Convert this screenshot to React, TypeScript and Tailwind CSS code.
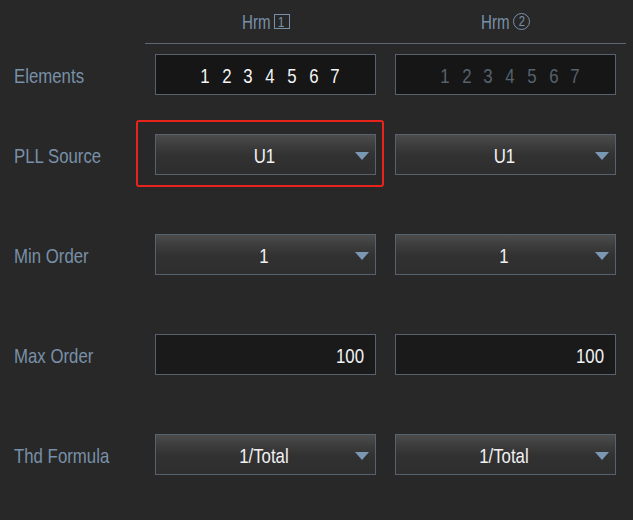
import React from "react";

const FONT = '"Liberation Sans", Arial, sans-serif';

function Sx({ children, o = "center" }: { children: React.ReactNode; o?: "left" | "center" | "right" }) {
  const origin = o === "left" ? "origin-left" : o === "right" ? "origin-right" : "origin-center";
  return <span className={`inline-block whitespace-pre scale-x-[0.8] ${origin}`}>{children}</span>;
}

function Arrow() {
  return (
    <svg width="14" height="8" viewBox="0 0 14 8" className="absolute right-[6px] top-[17px]">
      <polygon points="0,0 14,0 7,8" fill="#7a98b4" />
    </svg>
  );
}

function Dropdown({ value }: { value: string }) {
  return (
    <div className="relative w-[221px] h-[41px] border border-[#56636f] bg-[linear-gradient(to_bottom,#4c4c4c_0%,#3b3b3b_30%,#313131_55%,#2e2e2e_100%)] flex items-center justify-center text-[#f2f2f2] text-[21px] leading-none pt-[1px]">
      <span className="-ml-[3px]"><Sx>{value}</Sx></span>
      <Arrow />
    </div>
  );
}

function NumBox({ value }: { value: string }) {
  return (
    <div className="w-[221px] h-[41px] border border-[#56636f] bg-[#1a1a1a] flex items-center justify-end pr-[11px] text-[#f2f2f2] text-[21px] leading-none pt-[1px]">
      <Sx o="right">{value}</Sx>
    </div>
  );
}

function Elements({ enabled }: { enabled: boolean }) {
  return (
    <div className="w-[221px] h-[41px] border border-[#56636f] bg-[#161616] flex items-center justify-center pl-[9px] pt-[1px]">
      <div className={`flex gap-[10px] text-[21px] leading-none ${enabled ? "text-[#f4f4f4]" : "text-[#56626e]"}`}>
        {["1", "2", "3", "4", "5", "6", "7"].map((d) => (
          <Sx key={d}>{d}</Sx>
        ))}
      </div>
    </div>
  );
}

function Row({ label, mt, children }: { label: string; mt: string; children: React.ReactNode }) {
  return (
    <div className={`grid grid-cols-[145px_240px_248px] items-center h-[41px] ${mt}`}>
      <div className="pl-[14px] text-[#7890a8] text-[21px] leading-none pt-[2px]">
        <Sx o="left">{label}</Sx>
      </div>
      {children}
    </div>
  );
}

export default function App() {
  return (
    <div className="w-[633px] h-[520px] bg-[#282828] overflow-hidden" style={{ fontFamily: FONT }}>
      <div className="grid grid-cols-[145px_240px_241px] h-[44px]">
        <div />
        <div className="border-b border-[#5a6878] flex items-center justify-center pb-[1px] pl-[1px] text-[#7890a8] text-[21px] leading-none">
          <span className="inline-block w-[28px]">
            <span className="inline-block whitespace-pre scale-x-[0.72] origin-left">Hrm</span>
          </span>
          <span className="ml-[4px] w-[16px] h-[15px] border border-[#7890a8] flex items-center justify-center text-[15px] leading-none">
            <Sx>1</Sx>
          </span>
        </div>
        <div className="border-b border-[#5a6878] flex items-center justify-center pb-[1px] text-[#7890a8] text-[21px] leading-none">
          <span className="inline-block w-[28px]">
            <span className="inline-block whitespace-pre scale-x-[0.72] origin-left">Hrm</span>
          </span>
          <span className="ml-[4px] w-[17px] h-[17px] border border-[#7890a8] rounded-full flex items-center justify-center text-[14px] leading-none">
            <Sx>2</Sx>
          </span>
        </div>
      </div>

      <Row label="Elements" mt="mt-[10px]">
        <div className="pl-[10px]"><Elements enabled /></div>
        <div className="pl-[10px]"><Elements enabled={false} /></div>
      </Row>

      <Row label="PLL Source" mt="mt-[39px]">
        <div className="pl-[10px] relative">
          <Dropdown value="U1" />
          <div className="absolute left-[-9px] top-[-14px] w-[248px] h-[67px] border-2 border-[#e8231b] rounded-[3px] pointer-events-none" />
        </div>
        <div className="pl-[10px]"><Dropdown value="U1" /></div>
      </Row>

      <Row label="Min Order" mt="mt-[59px]">
        <div className="pl-[10px]"><Dropdown value="1" /></div>
        <div className="pl-[10px]"><Dropdown value="1" /></div>
      </Row>

      <Row label="Max Order" mt="mt-[59px]">
        <div className="pl-[10px]"><NumBox value="100" /></div>
        <div className="pl-[10px]"><NumBox value="100" /></div>
      </Row>

      <Row label="Thd Formula" mt="mt-[59px]">
        <div className="pl-[10px]"><Dropdown value="1/Total" /></div>
        <div className="pl-[10px]"><Dropdown value="1/Total" /></div>
      </Row>
    </div>
  );
}
